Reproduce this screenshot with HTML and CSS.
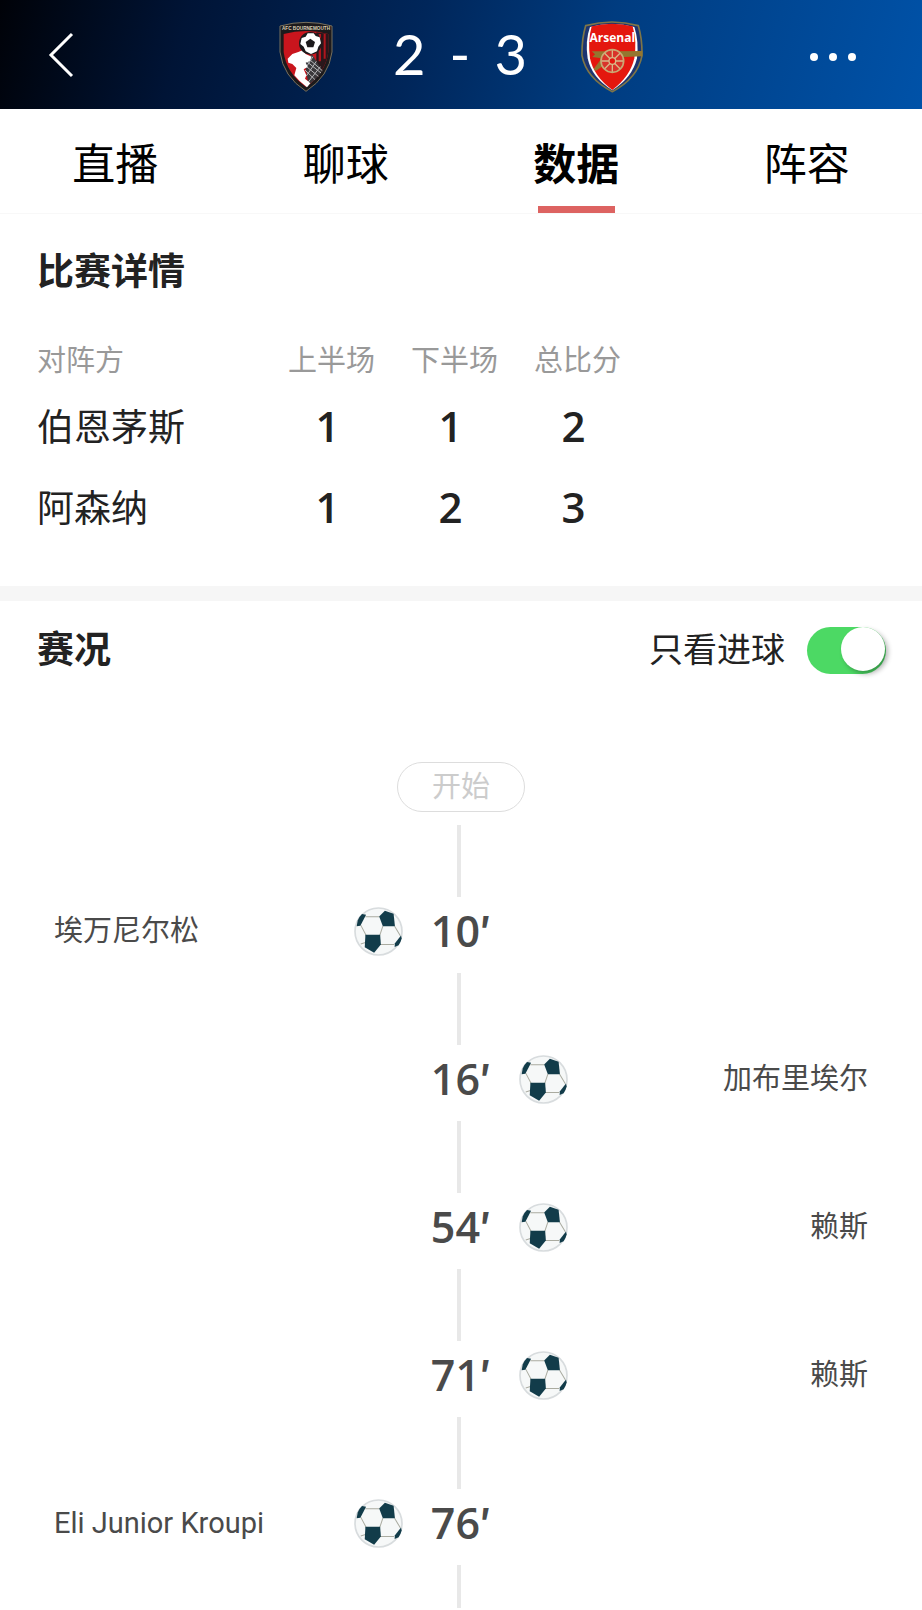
FILE: index.html
```html
<!DOCTYPE html>
<html lang="zh-CN">
<head>
  <meta charset="UTF-8" />
  <meta name="viewport" content="width=device-width, initial-scale=1.0"/>
  <title>伯恩茅斯 2 - 3 阿森纳</title>
  <link rel="stylesheet" href="styles.css">
</head>
<body>

<!-- football icon, reused by every goal -->
<svg class="defs" width="0" height="0" aria-hidden="true">
  <symbol id="ball" viewBox="0 0 146 146">
    <circle cx="73" cy="73" r="70" fill="#f6f8f8" stroke="#d8dcde" stroke-width="5"/>
    <g fill="none" stroke="#aaaba0" stroke-width="3">
      <path d="M34 29H76M20 54L36 84M86 57L77 84M121 57L138 86M78 112H120M34 106L20 110"/>
    </g>
    <g fill="#123c4a">
      <path d="M75 28L92 11L118 20L122 57L86 57Z"/>
      <path d="M34 83H78L80 112L60 136L32 120Z"/>
      <path d="M8 57L11 40Q17 27 24 21L36 23L19 56Z"/>
      <path d="M140 85L142 94Q139 106 133 114L121 119L122 108Z"/>
    </g>
  </symbol>
</svg>

<header class="topbar">
  <button class="back" aria-label="返回">
    <svg width="26" height="46" viewBox="0 0 26 46"><path d="M24 2L3 23L24 44" fill="none" stroke="#fff" stroke-width="3"/></svg>
  </button>
  <div class="match">
    <svg class="crest" width="54" height="72" viewBox="0 0 162 214">
      <path d="M3 14Q81 -8 159 14V92Q150 165 81 210Q12 165 3 92Z" fill="#1c1a1c" stroke="#77705e" stroke-width="3"/>
      <path d="M14 38Q81 20 148 38V92Q140 155 81 197Q22 155 14 92Z" fill="#c9151d"/>
      <path d="M112 33L148 38V92Q144 122 128 148L112 130Z" fill="#2a171b"/>
      <path d="M119 38H126V120H119ZM134 38H140V112H134Z" fill="#b0151d"/>
      <path d="M76 112L100 100L130 148Q112 175 88 190Z" fill="#3a383b"/>
      <path d="M80 118L126 155M84 108L130 148M78 132L118 165M78 146L108 175M102 106L80 140M112 120L82 164M124 136L88 182" stroke="#b5b5b8" stroke-width="3"/>
      <path d="M26 112L40 98L58 92L72 86L80 98L98 106L92 120L80 124L86 136L74 144L82 162L78 172L94 186L84 198Q60 180 46 162L52 140L40 128L28 124Z" fill="#fff"/>
      <circle cx="94" cy="66" r="34" fill="#1c1a1c"/>
      <path d="M86 36H104L110 44L122 48L126 66L118 76L114 90L96 98L80 90L74 76L64 68L68 50L80 46Z" fill="#fff"/>
      <path d="M94 52L108 62L103 78H85L80 62Z" fill="#1c1a1c"/>
      <text x="81" y="27" class="crest-small" text-anchor="middle">AFC BOURNEMOUTH</text>
    </svg>
    <div class="score"><span>2</span><span>-</span><span>3</span></div>
    <svg class="crest" width="62" height="72" viewBox="0 0 186 216">
      <path d="M14 14Q93 -8 172 14Q184 54 183 104Q170 172 94 212Q16 172 3 104Q2 54 14 14Z" fill="#1d3470" stroke="#7d7548" stroke-width="5"/>
      <path d="M27 18Q93 0 160 18Q174 60 168 112Q154 170 94 208Q32 170 20 112Q12 60 27 18Z" fill="#fff"/>
      <path d="M32 16Q93 0 155 16Q168 60 160 112Q148 166 94 207Q38 166 27 112Q20 60 32 16Z" fill="#e4170e"/>
      <path d="M32 91H92L184 90V106L130 108L88 120L44 150L38 144L62 112L34 108L42 100Z" fill="#94762f"/>
      <circle cx="94" cy="120" r="34" fill="#d9332a" stroke="#c9a873" stroke-width="5"/>
      <path d="M94 88V152M62 120H126M71 97L117 143M117 97L71 143" stroke="#d8b888" stroke-width="4"/>
      <circle cx="94" cy="120" r="10" fill="#e4170e" stroke="#d8b888" stroke-width="4"/>
      <text x="94" y="64" class="crest-name" text-anchor="middle">Arsenal</text>
    </svg>
  </div>
  <button class="more" aria-label="更多"><i></i><i></i><i></i></button>
</header>

<nav class="tabs">
  <a href="#">直播</a>
  <a href="#">聊球</a>
  <a href="#" class="active">数据</a>
  <a href="#">阵容</a>
</nav>

<section class="detail">
  <h2>比赛详情</h2>
  <table>
    <thead>
      <tr><th class="team">对阵方</th><th>上半场</th><th>下半场</th><th>总比分</th></tr>
    </thead>
    <tbody>
      <tr><td class="team">伯恩茅斯</td><td>1</td><td>1</td><td>2</td></tr>
      <tr><td class="team">阿森纳</td><td>1</td><td>2</td><td>3</td></tr>
    </tbody>
  </table>
</section>

<section class="events">
  <div class="events-head">
    <h2>赛况</h2>
    <label for="goalsOnly">只看进球</label>
    <input type="checkbox" id="goalsOnly" class="switch" checked>
  </div>

  <div class="timeline">
    <div class="start">开始</div>
    <div class="line"></div>
    <div class="event">
      <div class="side home"><span>埃万尼尔松</span><svg class="ball"><use href="#ball"/></svg></div>
      <div class="minute">10<span class="prime">′</span></div>
    </div>
    <div class="line"></div>
    <div class="event">
      <div class="minute">16<span class="prime">′</span></div>
      <div class="side away"><svg class="ball"><use href="#ball"/></svg><span>加布里埃尔</span></div>
    </div>
    <div class="line"></div>
    <div class="event">
      <div class="minute">54<span class="prime">′</span></div>
      <div class="side away"><svg class="ball"><use href="#ball"/></svg><span>赖斯</span></div>
    </div>
    <div class="line"></div>
    <div class="event">
      <div class="minute">71<span class="prime">′</span></div>
      <div class="side away"><svg class="ball"><use href="#ball"/></svg><span>赖斯</span></div>
    </div>
    <div class="line"></div>
    <div class="event">
      <div class="side home"><span>Eli Junior Kroupi</span><svg class="ball"><use href="#ball"/></svg></div>
      <div class="minute">76<span class="prime">′</span></div>
    </div>
    <div class="line last"></div>
  </div>
</section>

</body>
</html>
```
FILE: styles.css
```css
* {
  box-sizing: border-box;
}

body {
  margin: 0;
  background: #fff;
  color: #222;
  font-family: Roboto, 'Noto Sans CJK SC', sans-serif;
  line-height: 1.2;
}

.defs {
  position: absolute;
}

button {
  padding: 0;
  border: none;
  background: none;
  cursor: pointer;
}

h2 {
  margin: 0;
  font-size: 37px;
  line-height: 46px;
  font-weight: bold;
}

/* top bar */
.topbar {
  display: grid;
  grid-template-columns: 1fr auto 1fr;
  align-items: center;
  height: 109px;
  padding: 0 48px;
  background: linear-gradient(105deg, #000208 0%, #001436 20%, #00265a 45%, #003c80 65%, #0052a8 100%);
}

.back {
  justify-self: start;
  display: flex;
}

.more {
  justify-self: end;
  display: flex;
  gap: 11px;
  padding: 4px 18px 0 0;
}

.more i {
  width: 8px;
  height: 8px;
  border-radius: 50%;
  background: #fff;
}

.match {
  display: flex;
  align-items: center;
}

.crest {
  display: block;
  margin-top: 4px;
}

.crest-small {
  font: bold 14px 'Liberation Sans', sans-serif;
  fill: #d8cfb8;
}

.crest-name {
  font: bold 36px 'Open Sans', sans-serif;
  fill: #fff;
}

.score {
  display: flex;
  gap: 24px;
  padding: 0 54px 2px 60px;
  color: #fff;
  font-family: Lato, sans-serif;
  font-size: 56px;
  line-height: 64px;
}

/* tabs */
.tabs {
  display: flex;
  height: 105px;
  border-bottom: 1px solid #f8f8f8;
}

.tabs a {
  flex: 1;
  display: flex;
  flex-direction: column;
  align-items: center;
  justify-content: space-between;
  padding-top: 24px;
  color: #000;
  font-size: 43px;
  line-height: 64px;
  text-decoration: none;
}

.tabs .active {
  font-weight: bold;
}

.tabs .active::after {
  content: '';
  width: 77px;
  height: 7px;
  background: #dd6361;
}

/* half-time table */
.detail {
  padding: 36px 37px 38px;
  border-bottom: 15px solid #f6f6f6;
}

table {
  margin-top: 35px;
  border-collapse: collapse;
}

th, td {
  width: 123px;
  padding: 0;
  text-align: center;
}

th {
  height: 55px;
  padding-top: 6px;
  color: #999;
  font-size: 29px;
  font-weight: normal;
}

td {
  height: 81px;
  padding-right: 8px;
  font-family: 'Open Sans', sans-serif;
  font-size: 42px;
  font-weight: 600;
}

.team {
  width: 233px;
  text-align: left;
}

td.team {
  padding-top: 6px;
  font-family: Roboto, 'Noto Sans CJK SC', sans-serif;
  font-size: 37px;
  font-weight: normal;
}

/* events */
.events-head {
  display: flex;
  align-items: center;
  height: 99px;
  padding: 0 36px 0 37px;
}

.events-head label {
  margin-left: auto;
  margin-right: 22px;
  font-size: 34px;
}

.switch {
  appearance: none;
  width: 79px;
  height: 47px;
  margin: 0;
  border-radius: 24px;
  background: #ccc;
  cursor: pointer;
}

.switch::before {
  content: '';
  display: block;
  width: 44px;
  height: 44px;
  border-radius: 50%;
  background: #fff;
  box-shadow: 3px 3px 5px rgba(0, 0, 0, 0.3);
}

.switch:checked {
  background: #4cd964;
}

.switch:checked::before {
  margin-left: 34px;
}

.timeline {
  display: flex;
  flex-direction: column;
  align-items: center;
  padding-top: 62px;
}

.start {
  width: 128px;
  margin-bottom: 13px;
  border: 1px solid #ddd;
  border-radius: 25px;
  color: #ccc;
  font-size: 29px;
  line-height: 48px;
  text-align: center;
}

.line {
  width: 4px;
  height: 72px;
  margin-right: 4px;
  background: #e8e8e8;
}

.line.last {
  height: 43px;
}

.event {
  display: grid;
  grid-template-columns: 1fr auto 1fr;
  align-items: center;
  width: 100%;
  height: 76px;
  padding: 0 54px 8px;
  color: #4a4a4a;
}

.minute {
  grid-column: 2;
  font-family: 'Open Sans', sans-serif;
  font-size: 43px;
  line-height: 52px;
  font-weight: 600;
}

.prime {
  font-family: Inter, sans-serif;
}

.side {
  display: flex;
  align-items: center;
  justify-content: space-between;
  font-size: 29px;
}

.home {
  padding-right: 28px;
}

.away {
  padding-left: 28px;
}

.ball {
  width: 49px;
  height: 49px;
}
```
